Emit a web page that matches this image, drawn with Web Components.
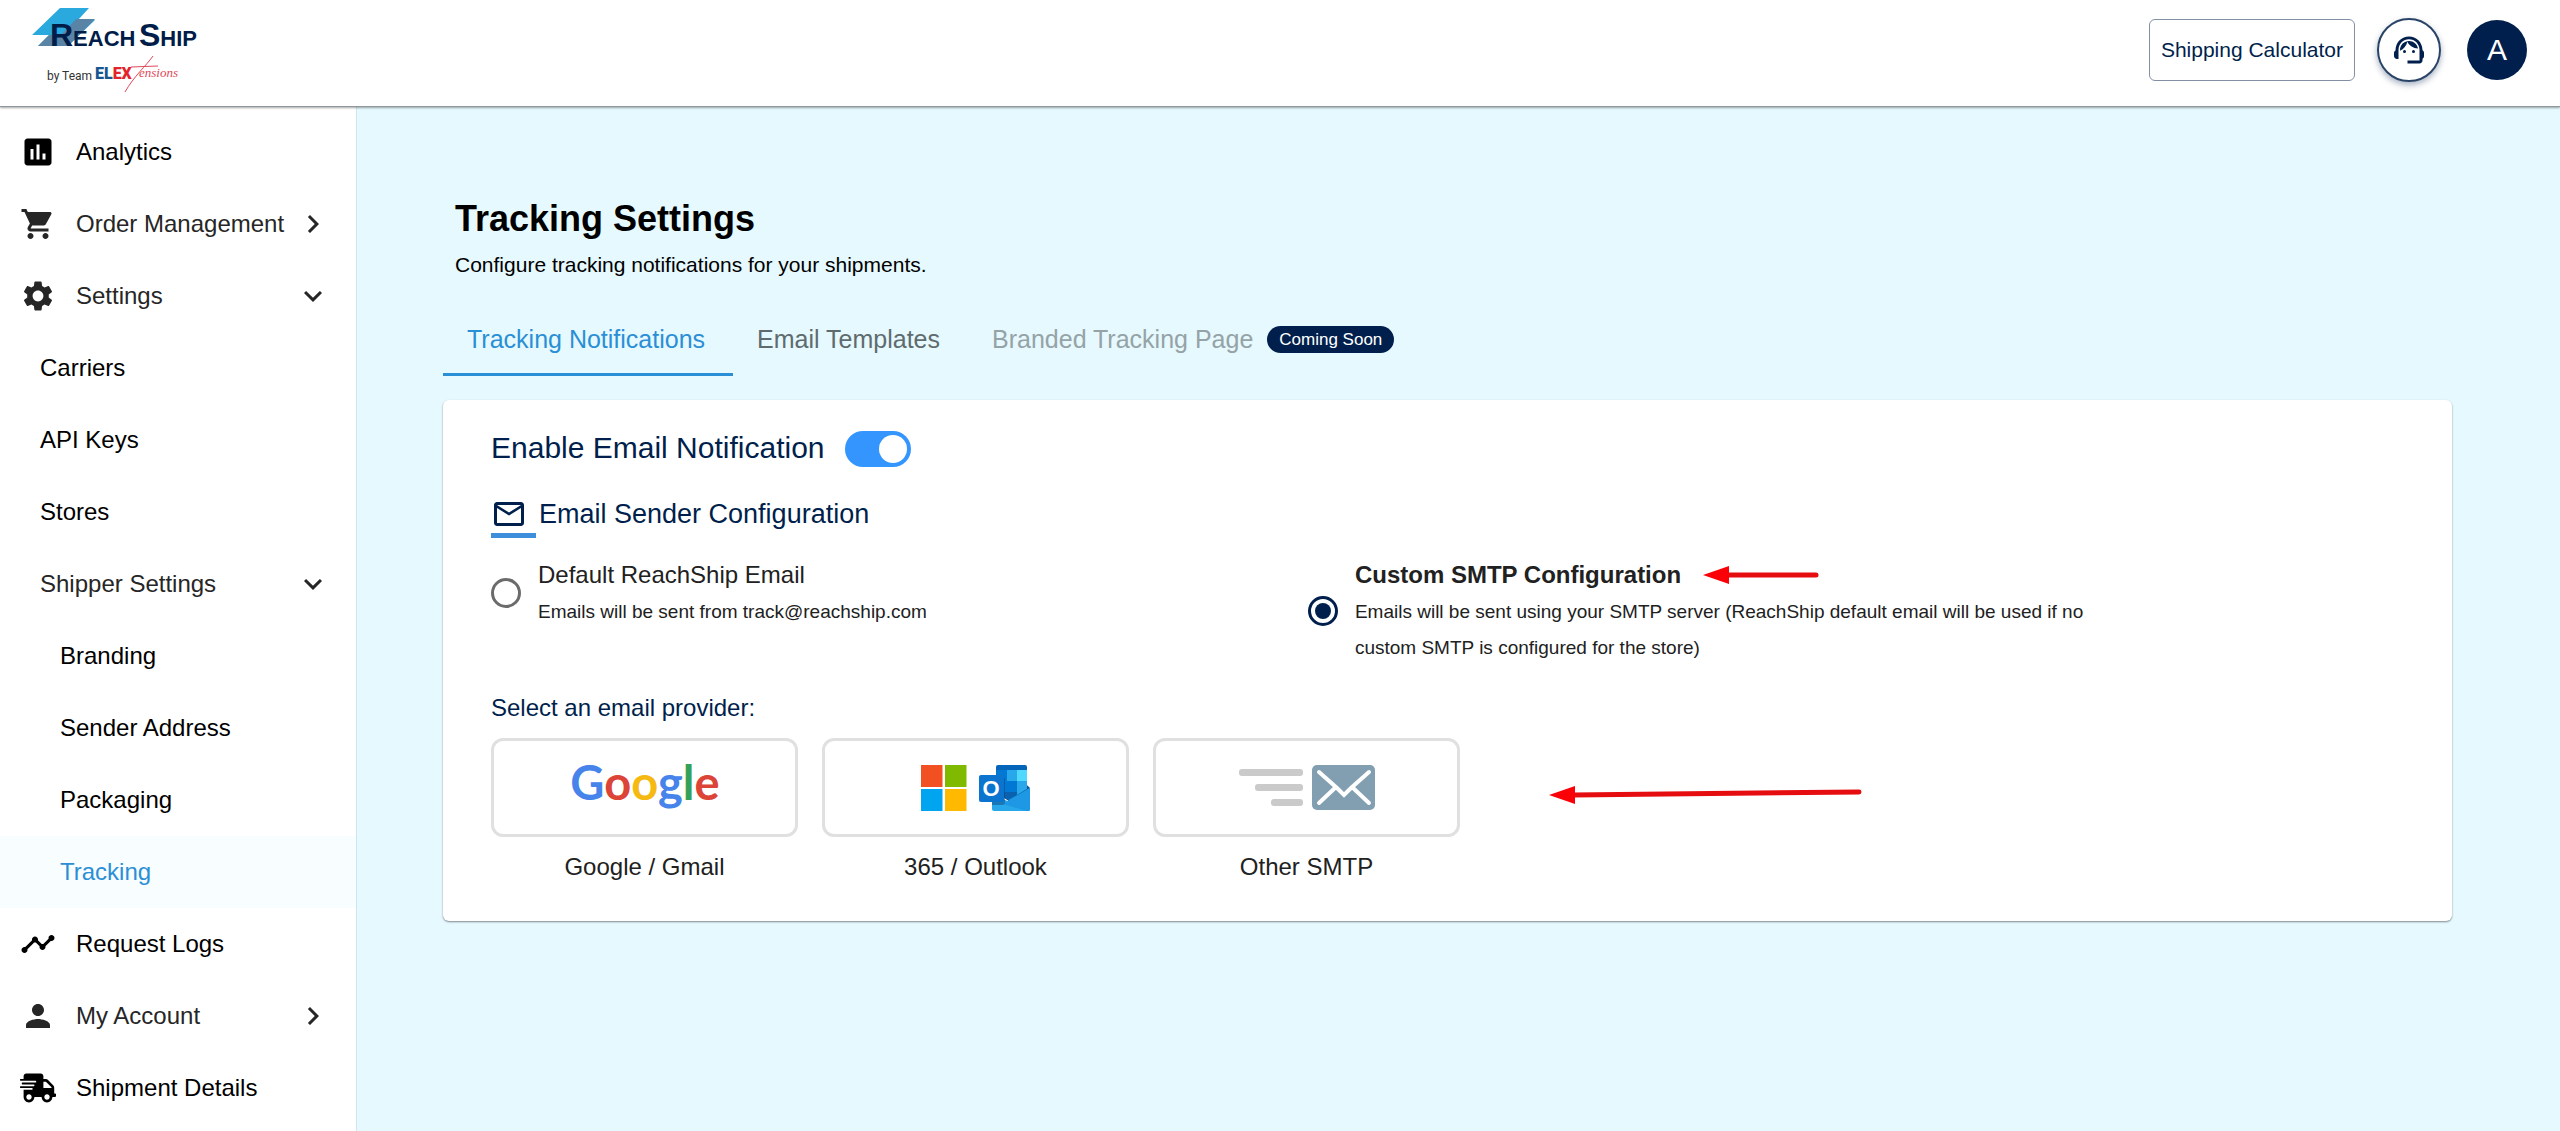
<!DOCTYPE html>
<html lang="en">
<head>
<meta charset="utf-8">
<title>ReachShip – Tracking Settings</title>
<style>
  html, body { margin: 0; min-height: 100%; background: #e6f9fe; }
  body {
    --navy: #001f4c;
    --blue: #2b8fd6;
    --ink: #212121;
    font-family: "Liberation Sans", Arial, sans-serif;
    font-size: 24px;
    color: var(--ink);
  }
</style>
</head>
<body>
<rs-app></rs-app>

<script>
const define = (name, markup, setup) => {
  const template = document.createElement('template');
  template.innerHTML = markup;
  customElements.define(name, class extends HTMLElement {
    connectedCallback() {
      if (this.shadowRoot) return;
      this.attachShadow({ mode: 'open' }).append(template.content.cloneNode(true));
      if (setup) setup(this, this.shadowRoot);
    }
  });
};

const ICONS = {
  analytics: '<path d="M19 3H5c-1.100 0-2 .9-2 2v14c0 1.100.9 2 2 2h14c1.100 0 2-.9 2-2V5c0-1.100-.9-2-2-2zM9 17H7v-7h2v7zm4 0h-2V7h2v10zm4 0h-2v-4h2v4z"/>',
  cart: '<path d="M7 18c-1.100 0-1.990.9-1.990 2S5.900 22 7 22s2-.9 2-2-.9-2-2-2zM1 2v2h2l3.600 7.590-1.350 2.450c-.16.28-.25.61-.25.96 0 1.100.9 2 2 2h12v-2H7.420c-.14 0-.25-.11-.25-.25l.03-.12.9-1.630h7.450c.75 0 1.410-.41 1.750-1.030l3.580-6.490c.08-.14.12-.31.12-.48 0-.55-.45-1-1-1H5.210l-.94-2H1zm16 16c-1.100 0-1.990.9-1.990 2s.89 2 1.990 2 2-.9 2-2-.9-2-2-2z"/>',
  gear: '<path d="M19.140 12.940c.04-.3.06-.61.06-.94 0-.32-.02-.64-.07-.94l2.030-1.580c.18-.14.23-.41.12-.61l-1.920-3.320c-.12-.22-.37-.29-.59-.22l-2.390.96c-.5-.38-1.030-.7-1.620-.94L14.400 2.810c-.04-.24-.24-.41-.48-.41h-3.840c-.24 0-.43.17-.47.41L9.250 5.350c-.59.24-1.130.57-1.620.94l-2.390-.96c-.22-.08-.47 0-.59.22L2.740 8.870c-.12.21-.08.47.12.61l2.030 1.580c-.05.3-.09.63-.09.94s.02.64.07.94l-2.030 1.580c-.18.14-.23.41-.12.61l1.920 3.320c.12.22.37.29.59.22l2.390-.96c.5.38 1.030.7 1.620.94l.36 2.540c.05.24.24.41.48.41h3.840c.24 0 .44-.17.47-.41l.36-2.540c.59-.24 1.130-.56 1.620-.94l2.390.96c.22.08.47 0 .59-.22l1.920-3.320c.12-.22.07-.47-.12-.61l-2.010-1.580zM12 15.600c-1.980 0-3.600-1.620-3.600-3.600s1.620-3.600 3.600-3.600 3.600 1.620 3.600 3.600-1.620 3.600-3.600 3.600z"/>',
  timeline: '<path d="M23 8c0 1.100-.9 2-2 2-.18 0-.35-.02-.51-.07l-3.560 3.550c.05.16.07.34.07.52 0 1.100-.9 2-2 2s-2-.9-2-2c0-.18.02-.36.07-.52l-2.550-2.550c-.16.05-.34.07-.52.07s-.36-.02-.52-.07l-4.550 4.560c.05.16.07.33.07.51 0 1.100-.9 2-2 2s-2-.9-2-2 .9-2 2-2c.18 0 .35.02.51.07l4.560-4.550C8.020 9.360 8 9.180 8 9c0-1.100.9-2 2-2s2 .9 2 2c0 .18-.02.36-.07.52l2.550 2.550c.16-.05.34-.07.52-.07s.36.02.52.07l3.550-3.560C19.020 8.350 19 8.180 19 8c0-1.100.9-2 2-2s2 .9 2 2z"/>',
  person: '<path d="M12 12c2.210 0 4-1.790 4-4s-1.790-4-4-4-4 1.790-4 4 1.790 4 4 4zm0 2c-2.670 0-8 1.340-8 4v2h16v-2c0-2.660-5.330-4-8-4z"/>',
  truck: '<path transform="translate(0 2.400) scale(.0375)" d="M624 352h-16V243.900c0-12.700-5.100-24.900-14.100-33.900L494 110.100c-9-9-21.200-14.100-33.900-14.100H416V48c0-26.500-21.500-48-48-48H112C85.500 0 64 21.500 64 48v48H8c-4.400 0-8 3.600-8 8v16c0 4.400 3.600 8 8 8h272c4.400 0 8 3.600 8 8v16c0 4.400-3.600 8-8 8H40c-4.400 0-8 3.600-8 8v16c0 4.400 3.600 8 8 8h208c4.400 0 8 3.600 8 8v16c0 4.400-3.600 8-8 8H8c-4.400 0-8 3.600-8 8v16c0 4.400 3.600 8 8 8h208c4.400 0 8 3.600 8 8v16c0 4.400-3.600 8-8 8H64v128c0 53 43 96 96 96s96-43 96-96h128c0 53 43 96 96 96s96-43 96-96h48c8.800 0 16-7.200 16-16v-32c0-8.800-7.200-16-16-16zM160 464c-26.500 0-48-21.500-48-48s21.500-48 48-48 48 21.500 48 48-21.500 48-48 48zm320 0c-26.500 0-48-21.500-48-48s21.500-48 48-48 48 21.500 48 48-21.500 48-48 48zm80-208H416V144h44.100l99.900 99.900V256z"/>',
  right: '<path d="M10 6 8.590 7.410 13.170 12l-4.580 4.590L10 18l6-6z"/>',
  down: '<path d="M16.590 8.590 12 13.170 7.410 8.590 6 10l6 6 6-6z"/>',
  mail: '<path d="M20 4H4c-1.100 0-1.990.9-1.990 2L2 18c0 1.100.9 2 2 2h16c1.100 0 2-.9 2-2V6c0-1.100-.9-2-2-2zm0 14H4V8l8 5 8-5v10zm-8-7L4 6h16l-8 5z"/>',
  support: '<path d="M21 12.220C21 6.730 16.740 3 12 3c-4.690 0-9 3.650-9 9.280-.6.34-1 .98-1 1.720v2c0 1.100.9 2 2 2h1v-6.100c0-3.870 3.130-7 7-7s7 3.130 7 7V19h-8v2h8c1.100 0 2-.9 2-2v-1.220c.59-.31 1-.92 1-1.640v-2.300c0-.7-.41-1.310-1-1.620z"/><circle cx="9" cy="13" r="1"/><circle cx="15" cy="13" r="1"/><path d="M18 11.030C17.520 8.180 15.040 6 12.050 6c-3.030 0-6.290 2.510-6.030 6.450 2.470-1.010 4.330-3.210 4.860-5.890 1.310 2.630 4 4.440 7.120 4.470z"/>'
};

define('rs-icon', `
  <style>
    :host { display: block; flex: none; width: 36px; height: 36px; }
    svg { display: block; width: 100%; height: 100%; fill: currentColor; }
  </style>
  <svg viewBox="0 0 24 24" aria-hidden="true"></svg>`,
  (host, root) => { root.querySelector('svg').innerHTML = ICONS[host.getAttribute('name')] || ''; });

define('rs-logo', `
  <style>
    :host { display: block; }
    svg { display: block; }
    .word { font-family: "Liberation Sans", sans-serif; font-weight: 700; fill: #001c48; }
    .by { font-family: Roboto, sans-serif; font-size: 12px; fill: #333; }
    .elex { font-family: Roboto, sans-serif; font-weight: 900; font-size: 16px; }
    .script { font-family: "Liberation Serif", serif; font-style: italic; font-size: 13px; fill: #e0485a; }
  </style>
  <svg width="180" height="106" viewBox="0 0 180 106" role="img" aria-label="ReachShip by Team ELEXtensions">
    <path d="M40 8h29L58 20h17L48 46H18L29 35H12z" fill="#2aa9df"/>
    <path d="M56 19h19L48 46H18L29 35h12z" fill="#5a84a6"/>
    <text class="word" x="30" y="46"><tspan font-size="32">R</tspan><tspan font-size="22">EACH</tspan></text>
    <text class="word" x="119" y="46"><tspan font-size="32">S</tspan><tspan font-size="22">HIP</tspan></text>
    <text class="by" x="27" y="80">by Team</text>
    <text class="elex" x="75" y="79"><tspan fill="#17568f">EL</tspan><tspan fill="#e2242b">EX</tspan></text>
    <text class="script" x="119" y="77">ensions</text>
    <path d="M133 56C126 66 114 76 105 92M111 67l27-1" fill="none" stroke="#e0485a" stroke-width="1"/>
  </svg>`);

define('rs-header', `
  <style>
    :host {
      display: flex; align-items: center; justify-content: space-between;
      box-sizing: border-box; height: 107px; padding: 0 33px 0 20px;
      background: #fff; border-bottom: 1px solid #8f999d;
      box-shadow: 0 1px 2px rgba(0,0,0,.35); position: relative; z-index: 1;
    }
    nav { display: flex; align-items: center; padding-bottom: 6px; }
    button { font-family: inherit; cursor: pointer; box-sizing: border-box; padding: 0; }
    .calc {
      height: 62px; padding: 0 11px; margin-right: 22px; font-size: 21px; color: var(--navy);
      background: #fff; border: 1px solid #8290a6; border-radius: 6px;
    }
    .support {
      display: grid; place-items: center; width: 64px; height: 64px; margin-right: 26px;
      border-radius: 50%; color: var(--navy); background: #fff; border: 2px solid #2a4468;
      box-shadow: 0 3px 6px rgba(0,31,76,.35);
    }
    .avatar {
      width: 60px; height: 60px; border: 0; border-radius: 50%;
      background: var(--navy); color: #fff; font-size: 30px;
    }
  </style>
  <rs-logo></rs-logo>
  <nav>
    <button class="calc">Shipping Calculator</button>
    <button class="support" aria-label="Support"><rs-icon name="support"></rs-icon></button>
    <button class="avatar">A</button>
  </nav>`);

define('rs-nav-item', `
  <style>
    :host { display: block; color: #000; }
    :host([chevron]) { color: #262626; }
    a {
      display: flex; align-items: center; box-sizing: border-box;
      height: 72px; padding: 0 25px 0 20px; color: inherit; text-decoration: none; white-space: nowrap;
    }
    :host([icon]) span { padding-left: 20px; }
    :host([level="1"]) a { padding-left: 40px; }
    :host([level="2"]) a { padding-left: 60px; }
    :host([active]) { color: var(--blue); background: #f8fdff; }
    span { flex: 1; }
  </style>
  <a href="#"><span><slot></slot></span></a>`,
  (host, root) => {
    const a = root.querySelector('a');
    const add = (name, where) => {
      const i = document.createElement('rs-icon');
      i.setAttribute('name', name);
      a[where](i);
    };
    if (host.hasAttribute('icon')) add(host.getAttribute('icon'), 'prepend');
    if (host.hasAttribute('chevron')) add(host.getAttribute('chevron'), 'append');
    if (host.hasAttribute('active')) a.setAttribute('aria-current', 'page');
  });

define('rs-sidebar', `
  <style>
    :host {
      display: block; flex: none; box-sizing: border-box; width: 357px; padding-top: 9px;
      background: #fff; border-right: 1px solid #cfe6ee;
    }
    nav { display: flex; flex-direction: column; }
  </style>
  <nav aria-label="Main">
    <rs-nav-item icon="analytics">Analytics</rs-nav-item>
    <rs-nav-item icon="cart" chevron="right">Order Management</rs-nav-item>
    <rs-nav-item icon="gear" chevron="down">Settings</rs-nav-item>
    <rs-nav-item level="1">Carriers</rs-nav-item>
    <rs-nav-item level="1">API Keys</rs-nav-item>
    <rs-nav-item level="1">Stores</rs-nav-item>
    <rs-nav-item level="1" chevron="down">Shipper Settings</rs-nav-item>
    <rs-nav-item level="2">Branding</rs-nav-item>
    <rs-nav-item level="2">Sender Address</rs-nav-item>
    <rs-nav-item level="2">Packaging</rs-nav-item>
    <rs-nav-item level="2" active>Tracking</rs-nav-item>
    <rs-nav-item icon="timeline">Request Logs</rs-nav-item>
    <rs-nav-item icon="person" chevron="right">My Account</rs-nav-item>
    <rs-nav-item icon="truck">Shipment Details</rs-nav-item>
  </nav>`);

define('rs-tabs', `
  <style>
    :host { display: block; }
    div { display: flex; }
    button {
      display: flex; align-items: center; gap: 14px; box-sizing: border-box; height: 72px;
      padding: 2px 28px 0 24px; border: 0; border-bottom: 3px solid transparent; background: none;
      font-family: inherit; font-size: 25px; color: #5f6b6e; white-space: nowrap; cursor: pointer;
    }
    button[aria-selected="true"] { color: var(--blue); border-bottom-color: var(--blue); }
    button:disabled { color: #95a3a7; cursor: default; }
    .badge {
      padding: 0 12px; border-radius: 14px; background: var(--navy); color: #fff;
      font-size: 17px; line-height: 27px;
    }
  </style>
  <div role="tablist">
    <button role="tab" aria-selected="true">Tracking Notifications</button>
    <button role="tab" aria-selected="false">Email Templates</button>
    <button role="tab" aria-selected="false" disabled>Branded Tracking Page <span class="badge">Coming Soon</span></button>
  </div>`);

define('rs-toggle', `
  <style>
    :host { display: block; }
    label { display: flex; align-items: center; gap: 20px; font-size: 30px; line-height: 48px; color: var(--navy); }
    input {
      appearance: none; display: flex; align-items: center; justify-content: flex-end; box-sizing: border-box;
      width: 66px; height: 36px; margin: 2px 0 0; padding: 4px; border-radius: 18px; background: #3395fd;
    }
    input::before { content: ""; width: 28px; height: 28px; border-radius: 50%; background: #fff; }
    input:not(:checked) { justify-content: flex-start; background: #b0b8c0; }
  </style>
  <label><slot></slot><input type="checkbox" role="switch" checked></label>`);

define('rs-arrow', `
  <style>
    :host { display: block; flex: none; }
    svg { display: block; }
  </style>
  <svg height="24" aria-hidden="true"><line stroke="#e60d10" stroke-width="5" stroke-linecap="round"/><path fill="#fb0007"/></svg>`,
  (host, root) => {
    const length = Number(host.getAttribute('length'));
    const rise = Number(host.getAttribute('rise') || 0);
    root.querySelector('svg').setAttribute('width', length);
    const line = root.querySelector('line');
    line.setAttribute('x1', 24); line.setAttribute('y1', 12);
    line.setAttribute('x2', length - 3); line.setAttribute('y2', 12 - rise);
    root.querySelector('path').setAttribute('d', 'M0 12 26 3v18z');
  });

define('rs-sender-options', `
  <style>
    :host { display: grid; grid-template-columns: 5fr 7fr; column-gap: 34px; align-items: start; }
    label { display: flex; align-items: center; gap: 17px; }
    input {
      appearance: none; flex: none; display: grid; place-items: center; box-sizing: border-box;
      width: 30px; height: 30px; margin: 0; border: 3px solid #6b6b6b; border-radius: 50%;
    }
    input:checked { border-color: var(--navy); }
    input:checked::before { content: ""; width: 16px; height: 16px; border-radius: 50%; background: var(--navy); }
    .title { display: flex; align-items: center; gap: 22px; line-height: 38px; }
    .bold { font-weight: 700; }
    .desc { display: block; max-width: 760px; font-size: 19px; line-height: 36px; }
  </style>
  <label>
    <input type="radio" name="sender" value="default">
    <span><span class="title">Default ReachShip Email</span>
    <span class="desc">Emails will be sent from track@reachship.com</span></span>
  </label>
  <label>
    <input type="radio" name="sender" value="custom" checked>
    <span><span class="title"><span class="bold">Custom SMTP Configuration</span><rs-arrow length="116"></rs-arrow></span>
    <span class="desc">Emails will be sent using your SMTP server (ReachShip default email will be used if no custom SMTP is configured for the store)</span></span>
  </label>`);

define('rs-provider', `
  <style>
    :host { display: block; width: 307px; }
    button {
      display: flex; flex-direction: column; gap: 12px; width: 100%; padding: 0; border: 0;
      background: none; font: inherit; color: inherit; text-align: center; cursor: pointer;
    }
    .tile {
      display: flex; align-items: center; justify-content: center; box-sizing: border-box;
      width: 100%; height: 99px; border: 3px solid #e0e0e0; border-radius: 12px; background: #fff;
    }
    .label { display: block; width: 100%; line-height: 36px; }
  </style>
  <button><span class="tile"><slot name="logo"></slot></span><span class="label"><slot></slot></span></button>`);

define('rs-card', `
  <style>
    :host {
      display: block; padding: 24px 48px 36px; background: #fff; border-radius: 6px;
      box-shadow: 0 1px 2px rgba(0,0,0,.45);
    }
    h2, h3 { margin: 0; font-weight: 400; color: var(--navy); }
    h2 { display: flex; gap: 3px; margin: 24px 0 18px; font-size: 27px; line-height: 36px; }
    h2 rs-icon { padding: 0 9px 1px 0; border-bottom: 5px solid #3d8fdc; }
    h3 { margin: 24px 0 12px; font-size: 24px; line-height: 36px; }
    .providers { display: flex; gap: 24px; }
    .providers rs-arrow { margin: 45px 0 0 65px; }
    svg { display: block; }
    .google { font-family: Lato, sans-serif; font-weight: 700; font-size: 47px; }
    .o { font-family: "Liberation Sans", sans-serif; font-weight: 700; font-size: 22px; fill: #fff; }
  </style>
  <rs-toggle>Enable Email Notification</rs-toggle>
  <h2><rs-icon name="mail"></rs-icon>Email Sender Configuration</h2>
  <rs-sender-options></rs-sender-options>
  <h3>Select an email provider:</h3>
  <div class="providers">
    <rs-provider>
      <svg slot="logo" width="160" height="76" viewBox="0 0 160 76">
        <text class="google" x="80" y="50" text-anchor="middle"><tspan fill="#4683ea">G</tspan><tspan fill="#dc4437">o</tspan><tspan fill="#f5b912">o</tspan><tspan fill="#4683ea">g</tspan><tspan fill="#35a156">l</tspan><tspan fill="#dc4437">e</tspan></text>
      </svg>
      Google / Gmail
    </rs-provider>
    <rs-provider>
      <svg slot="logo" width="110" height="46" viewBox="0 0 110 46">
        <path fill="#f25022" d="M0 0h21.500v22H0z"/><path fill="#7fba00" d="M24 0h21.500v22H24z"/>
        <path fill="#00a4ef" d="M0 24h21.500v22H0z"/><path fill="#ffb900" d="M24 24h21.500v22H24z"/>
        <path fill="#0a4f8e" d="M71 24 91 6l18 17-20 14z"/>
        <path fill="#0364b8" d="M77 0h27a2 2 0 0 1 2 2v4H75V2a2 2 0 0 1 2-2z"/>
        <path fill="#0078d4" d="M75 5h11v11H75zM75 16h11v11H75z"/>
        <path fill="#28a8ea" d="M86 5h10v11H86z"/><path fill="#50d9ff" d="M96 5h10v11H96z"/>
        <path fill="#0078d4" d="M86 16h10v11H86z"/><path fill="#28a8ea" d="M96 16h10v8l-10 6z"/>
        <path fill="#0a61b0" d="M75 27h21v3l-8 5-13-5z"/>
        <path fill="#1490df" d="M109 23v21a2 2 0 0 1-2 2L87 35z"/>
        <path fill="#28a8ea" d="M71 29l38 17H73a2 2 0 0 1-2-2z"/>
        <path fill="#1e98e4" d="M109 23 82 39l24 7h1a2 2 0 0 0 2-2z"/>
        <path fill="#0b3d73" opacity=".45" d="M71 13h13v24a3 3 0 0 1-3 3H71z"/>
        <rect x="58" y="10" width="25" height="27" rx="2" fill="#0a74cf"/>
        <text class="o" x="70" y="31" text-anchor="middle">O</text>
      </svg>
      365 / Outlook
    </rs-provider>
    <rs-provider>
      <svg slot="logo" width="136" height="45" viewBox="0 0 136 45">
        <g fill="#cacaca"><rect y="4" width="64" height="7" rx="3"/><rect x="16" y="19" width="48" height="7" rx="3"/><rect x="32" y="34" width="32" height="7" rx="3"/></g>
        <rect x="73" width="63" height="45" rx="5" fill="#829fb1"/>
        <path d="m80 7 18 16 7 7 7-7 18-16M80 38l17-16M130 38l-17-16" fill="none" stroke="#fff" stroke-width="4" stroke-linecap="round"/>
      </svg>
      Other SMTP
    </rs-provider>
    <rs-arrow length="313" rise="3"></rs-arrow>
  </div>`);

define('rs-app', `
  <style>
    :host { display: flex; flex-direction: column; min-height: 100vh; }
    .body { display: flex; flex: 1; }
    main { flex: 1; min-width: 0; padding: 88px 108px 0 86px; }
    header { padding-left: 12px; color: #000; }
    h1 { margin: 0; font-size: 36px; line-height: 48px; font-weight: 700; }
    p { margin: 4px 0 21px; font-size: 21px; line-height: 36px; }
    rs-tabs { margin-bottom: 24px; }
  </style>
  <rs-header></rs-header>
  <div class="body">
    <rs-sidebar></rs-sidebar>
    <main>
      <header>
        <h1>Tracking Settings</h1>
        <p>Configure tracking notifications for your shipments.</p>
      </header>
      <rs-tabs></rs-tabs>
      <rs-card></rs-card>
    </main>
  </div>`);
</script>
</body>
</html>
